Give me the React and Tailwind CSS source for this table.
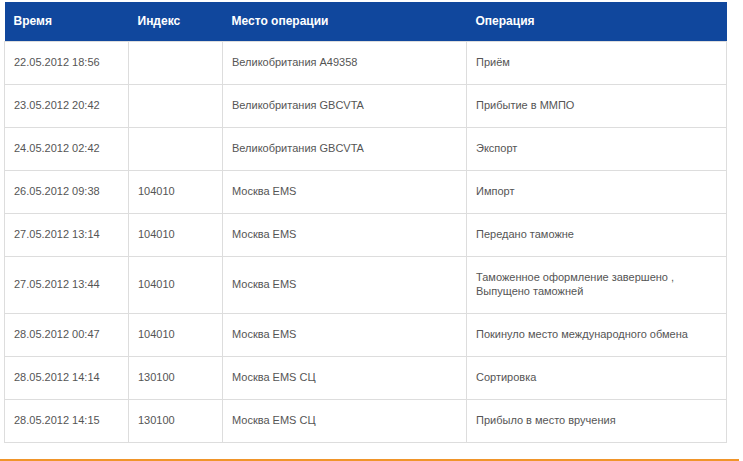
import React from "react";

const rows = [
  ["22.05.2012 18:56", "", "Великобритания A49358", "Приём"],
  ["23.05.2012 20:42", "", "Великобритания GBCVTA", "Прибытие в ММПО"],
  ["24.05.2012 02:42", "", "Великобритания GBCVTA", "Экспорт"],
  ["26.05.2012 09:38", "104010", "Москва EMS", "Импорт"],
  ["27.05.2012 13:14", "104010", "Москва EMS", "Передано таможне"],
  ["27.05.2012 13:44", "104010", "Москва EMS", "Таможенное оформление завершено , Выпущено таможней"],
  ["28.05.2012 00:47", "104010", "Москва EMS", "Покинуло место международного обмена"],
  ["28.05.2012 14:14", "130100", "Москва EMS СЦ", "Сортировка"],
  ["28.05.2012 14:15", "130100", "Москва EMS СЦ", "Прибыло в место вручения"],
];

const App = () => {
  return (
    <div className="w-[743px] h-[461px] bg-white overflow-hidden font-['Liberation_Sans',Arial,sans-serif]">
      <table className="ml-[4px] mt-[2px] w-[722px] border-collapse table-fixed">
        <colgroup>
          <col className="w-[124px]" />
          <col className="w-[94px]" />
          <col className="w-[244px]" />
          <col className="w-[260px]" />
        </colgroup>
        <thead>
          <tr className="bg-[#10479d]">
            {["Время", "Индекс", "Место операции", "Операция"].map((h) => (
              <th
                key={h}
                className="text-left text-white font-bold text-[12px] leading-[15px] pt-[12px] pb-[12px] px-[9px]"
              >
                {h}
              </th>
            ))}
          </tr>
        </thead>
        <tbody>
          {rows.map((r, i) => (
            <tr key={i}>
              {r.map((c, j) => (
                <td
                  key={j}
                  className="border border-[#dddddd] align-middle text-[11px] leading-[14px] text-[#555555] pt-[13px] pb-[15px] px-[9px]"
                >
                  {j === 3 && c.includes(",") ? (
                    <>
                      Таможенное оформление завершено ,
                      <br />
                      Выпущено таможней
                    </>
                  ) : (
                    c
                  )}
                </td>
              ))}
            </tr>
          ))}
        </tbody>
      </table>
      <div className="mt-[16px] h-[3px] w-[739px] bg-[#f0952a]" />
    </div>
  );
};

export default App;
